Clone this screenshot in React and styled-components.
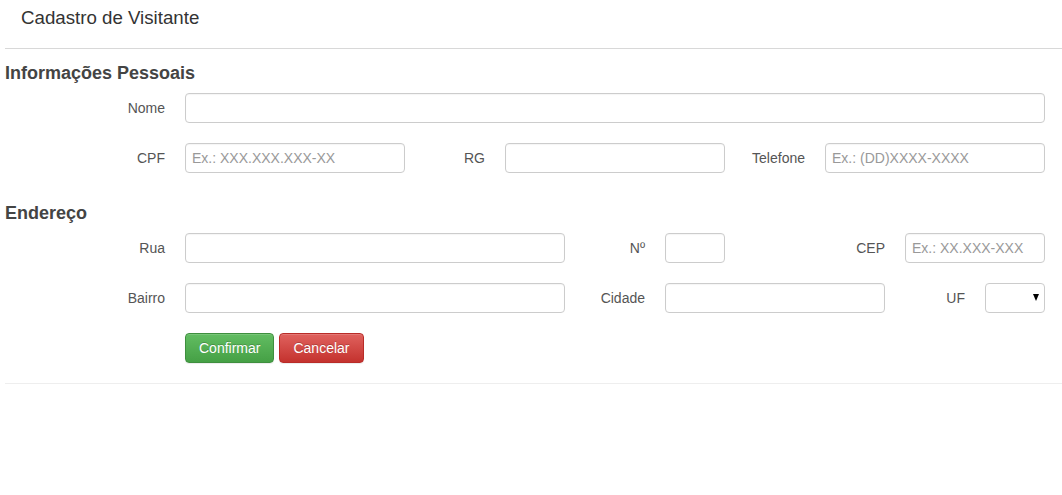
import React from "react"
import styled, { createGlobalStyle } from "styled-components"

const GlobalStyle = createGlobalStyle`
  body {
    margin: 0;
    background: #fff;
    font-family: "Liberation Sans", Arial, sans-serif;
    font-size: 14px;
    color: #333;
  }
  * { box-sizing: border-box; }
`

const Header = styled.div`
  padding: 8px 21px 20px;
  font-size: 18.7px;
  line-height: 20px;
  color: #333;
`

const Rule = styled.hr`
  margin: 0 0 0 5px;
  border: 0;
  border-top: 1px solid ${(p) => p.$color || "#ddd"};
`

const Form = styled.form`
  padding: 14px 0 0 5px;
`

const SectionTitle = styled.h3`
  margin: ${(p) => (p.$first ? "0" : "30px")} 0 10px;
  font-size: 18px;
  line-height: 20px;
  font-weight: bold;
  color: #444;
`

const Grid = styled.div`
  display: grid;
  grid-template-columns: repeat(13, 80px);
  row-gap: 20px;
`

const Label = styled.label`
  grid-column: span ${(p) => p.$span || 1};
  display: flex;
  align-items: center;
  justify-content: flex-end;
  height: 30px;
  color: #555;
  font-size: 14px;
`

const Field = styled.div`
  grid-column: span ${(p) => p.$span || 1};
  padding-left: 20px;
  position: relative;
`

const Input = styled.input`
  display: block;
  width: 100%;
  height: 30px;
  padding: 0 6px;
  border: 1px solid #ccc;
  border-radius: 4px;
  font-family: inherit;
  font-size: 14px;
  color: #555;
  box-shadow: inset 0 1px 1px rgba(0, 0, 0, 0.04);
  &::placeholder {
    color: #999;
  }
`

const Select = styled.select`
  display: block;
  width: 100%;
  height: 30px;
  padding: 0 6px;
  border: 1px solid #ccc;
  border-radius: 4px;
  background: #fff;
  appearance: none;
  font-family: inherit;
  font-size: 14px;
`

const Arrow = styled.span`
  position: absolute;
  right: 6px;
  top: 11px;
  width: 0;
  height: 0;
  border-left: 3.5px solid transparent;
  border-right: 3.5px solid transparent;
  border-top: 7px solid #000;
  pointer-events: none;
`

const Actions = styled.div`
  grid-column: 3 / span 11;
  padding-left: 20px;
  display: flex;
  gap: 5px;
`

const Button = styled.button`
  height: 30px;
  padding: 0 13px;
  font-family: inherit;
  font-size: 14px;
  color: #fff;
  border-radius: 4px;
  border: 1px solid ${(p) => (p.$variant === "danger" ? "#b92c28" : "#3e8f3e")};
  background: ${(p) =>
    p.$variant === "danger"
      ? "linear-gradient(to bottom, #e0625e 0, #c4322e 100%)"
      : "linear-gradient(to bottom, #62bd62 0, #45a045 100%)"};
  text-shadow: 0 -1px 0 rgba(0, 0, 0, 0.2);
  box-shadow: inset 0 1px 0 rgba(255, 255, 255, 0.15), 0 1px 1px rgba(0, 0, 0, 0.075);
`

const Footer = styled.div`
  padding-top: 20px;
`

export default function App() {
  return (
    <>
      <GlobalStyle />
      <Header>Cadastro de Visitante</Header>
      <Rule $color="#d8d8d8" />
      <Form onSubmit={(e) => e.preventDefault()}>
        <SectionTitle $first>Informações Pessoais</SectionTitle>
        <Grid>
          <Label $span={2}>Nome</Label>
          <Field $span={11}>
            <Input />
          </Field>

          <Label $span={2}>CPF</Label>
          <Field $span={3}>
            <Input placeholder="Ex.: XXX.XXX.XXX-XX" />
          </Field>
          <Label>RG</Label>
          <Field $span={3}>
            <Input />
          </Field>
          <Label>Telefone</Label>
          <Field $span={3}>
            <Input placeholder="Ex.: (DD)XXXX-XXXX" />
          </Field>
        </Grid>

        <SectionTitle>Endereço</SectionTitle>
        <Grid>
          <Label $span={2}>Rua</Label>
          <Field $span={5}>
            <Input />
          </Field>
          <Label>Nº</Label>
          <Field>
            <Input />
          </Field>
          <Label $span={2}>CEP</Label>
          <Field $span={2}>
            <Input placeholder="Ex.: XX.XXX-XXX" />
          </Field>

          <Label $span={2}>Bairro</Label>
          <Field $span={5}>
            <Input />
          </Field>
          <Label>Cidade</Label>
          <Field $span={3}>
            <Input />
          </Field>
          <Label>UF</Label>
          <Field>
            <Select defaultValue="">
              <option value=""></option>
            </Select>
            <Arrow />
          </Field>

          <Actions>
            <Button type="submit">Confirmar</Button>
            <Button type="button" $variant="danger">Cancelar</Button>
          </Actions>
        </Grid>
        <Footer />
      </Form>
      <Rule $color="#eee" />
    </>
  )
}
